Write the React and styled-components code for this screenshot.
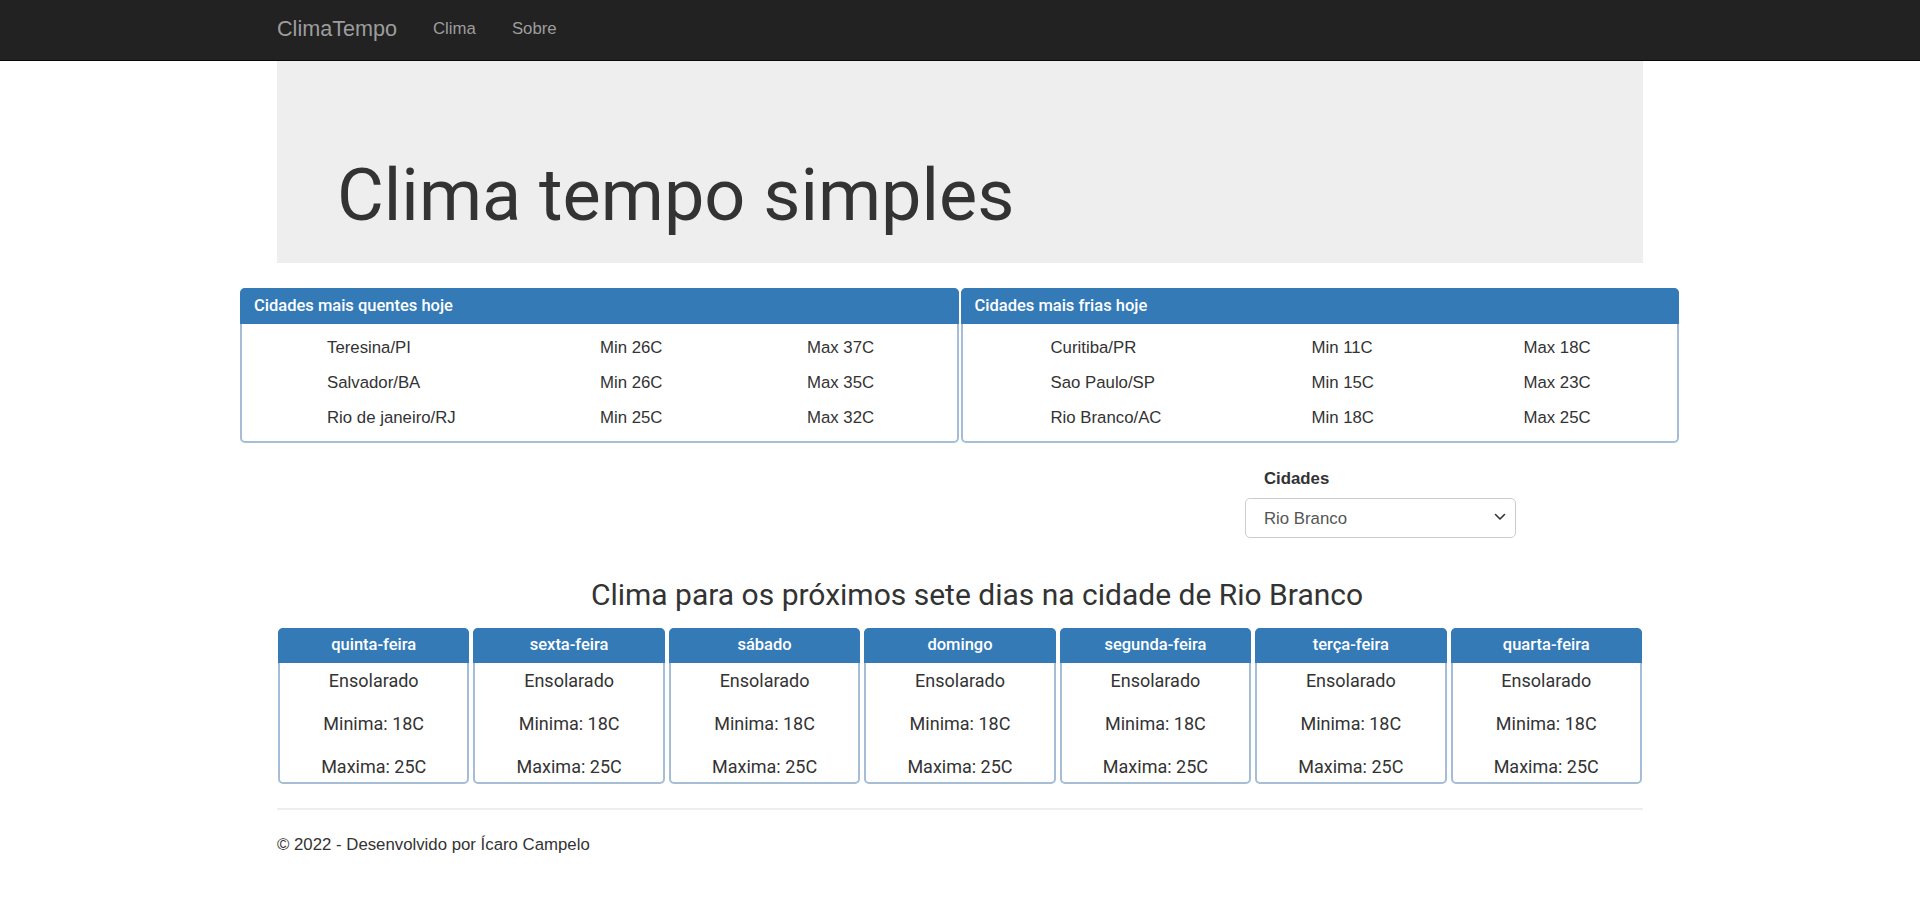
import React from 'react';
import styled, { createGlobalStyle } from 'styled-components';

const GlobalStyle = createGlobalStyle`
  html, body { margin: 0; padding: 0; background: #fff; }
  body {
    font-family: "Liberation Sans", Arial, sans-serif;
    font-size: 16.8px;
    line-height: 24px;
    color: #333;
  }
  * { box-sizing: border-box; }
`;

const Navbar = styled.nav`
  height: 61px;
  background: #222;
  border-bottom: 1px solid #080808;
`;

const NavInner = styled.div`
  width: 1366px;
  margin: 0 auto;
  height: 100%;
  display: flex;
  align-items: center;
  gap: 36px;
  padding-bottom: 2px;
`;

const Brand = styled.a`
  font-size: 21.6px;
  color: #9d9d9d;
  text-decoration: none;
  line-height: 24px;
`;

const NavLink = styled.a`
  font-size: 16.8px;
  color: #9d9d9d;
  text-decoration: none;
  line-height: 24px;
`;

const Container = styled.main`
  width: 1366px;
  margin: 0 auto;
`;

const Jumbotron = styled.section`
  background: #eee;
  padding: 95px 60px 28px;
`;

const Title = styled.h1`
  margin: 0;
  font-family: Roboto, "Liberation Sans", sans-serif;
  font-weight: 400;
  font-size: 72px;
  line-height: 1.1;
  color: #333;
`;

const PanelsRow = styled.div`
  display: flex;
  gap: 2px;
  width: 1439px;
  margin: 25px 0 0 -37px;
`;

const Panel = styled.div`
  flex: 1;
  border: 2px solid #a5bdd5;
  border-radius: 5px;
  background: #fff;
`;

const PanelHeading = styled.div`
  margin: -2px -2px 0;
  height: 36px;
  padding: 0 14px;
  display: flex;
  align-items: center;
  background: #337ab7;
  color: #fff;
  border-radius: 5px 5px 0 0;
  font-family: Roboto, "Liberation Sans", sans-serif;
  font-weight: 500;
  font-size: 16.5px;
`;

const PanelBody = styled.div`
  padding: 6px 0 6px ${p => p.$indent}px;
`;

const CityRow = styled.div`
  display: grid;
  grid-template-columns: ${p => p.$cols};
  height: 35px;
  align-items: center;
  font-size: 16.8px;
  color: #333;
`;

const FormRow = styled.div`
  display: flex;
  justify-content: flex-end;
  padding-right: 127px;
  margin-top: 24px;
`;

const FormGroup = styled.div`
  width: 271px;
  display: flex;
  flex-direction: column;
`;

const Label = styled.label`
  font-weight: 700;
  font-size: 16.8px;
  line-height: 24px;
  padding-left: 19px;
  margin-bottom: 7px;
  color: #333;
`;

const SelectWrap = styled.div`
  position: relative;
  height: 40px;
`;

const Select = styled.select`
  appearance: none;
  -webkit-appearance: none;
  width: 100%;
  height: 40px;
  border: 1px solid #ccc;
  border-radius: 5px;
  background: #fff;
  padding: 0 30px 0 18px;
  font-family: "Liberation Sans", Arial, sans-serif;
  font-size: 16.8px;
  color: #555;
  outline: none;
`;

const Chevron = styled.svg`
  position: absolute;
  right: 10px;
  top: 15px;
  pointer-events: none;
`;

const ForecastTitle = styled.h3`
  margin: 41px 0 0;
  padding-left: 34px;
  text-align: center;
  font-family: Roboto, "Liberation Sans", sans-serif;
  font-weight: 400;
  font-size: 30px;
  line-height: 31.7px;
  color: #333;
`;

const DaysRow = styled.div`
  display: flex;
  gap: 4px;
  padding: 0 1px;
  margin-top: 17px;
`;

const DayCard = styled.div`
  flex: 1;
  border: 2px solid #a5bdd5;
  border-radius: 5px;
  background: #fff;
  font-family: Roboto, "Liberation Sans", sans-serif;
`;

const DayHeading = styled.div`
  margin: -2px -2px 0;
  height: 35px;
  display: flex;
  align-items: center;
  justify-content: center;
  background: #337ab7;
  color: #fff;
  border-radius: 5px 5px 0 0;
  font-weight: 500;
  font-size: 16.5px;
`;

const DayBody = styled.div`
  display: flex;
  flex-direction: column;
  gap: 13px;
  padding-top: 3px;
`;

const DayLine = styled.div`
  height: 30px;
  display: flex;
  align-items: center;
  justify-content: center;
  font-size: 18px;
  color: #333;
`;

const Rule = styled.hr`
  margin: 24px 0 0;
  border: 0;
  border-top: 2px solid #eee;
`;

const Footer = styled.footer`
  margin-top: 23px;
  font-size: 16.8px;
  line-height: 24px;
  color: #333;
`;

const hot = [
  ['Teresina/PI', 'Min 26C', 'Max 37C'],
  ['Salvador/BA', 'Min 26C', 'Max 35C'],
  ['Rio de janeiro/RJ', 'Min 25C', 'Max 32C'],
];

const cold = [
  ['Curitiba/PR', 'Min 11C', 'Max 18C'],
  ['Sao Paulo/SP', 'Min 15C', 'Max 23C'],
  ['Rio Branco/AC', 'Min 18C', 'Max 25C'],
];

const days = ['quinta-feira', 'sexta-feira', 'sábado', 'domingo', 'segunda-feira', 'terça-feira', 'quarta-feira'];

function CityPanel({ title, rows, indent, cols }) {
  return (
    <Panel>
      <PanelHeading>{title}</PanelHeading>
      <PanelBody $indent={indent}>
        {rows.map(r => (
          <CityRow key={r[0]} $cols={cols}>
            <span>{r[0]}</span>
            <span>{r[1]}</span>
            <span>{r[2]}</span>
          </CityRow>
        ))}
      </PanelBody>
    </Panel>
  );
}

export default function App() {
  return (
    <>
      <GlobalStyle />
      <Navbar>
        <NavInner>
          <Brand href="#">ClimaTempo</Brand>
          <NavLink href="#">Clima</NavLink>
          <NavLink href="#">Sobre</NavLink>
        </NavInner>
      </Navbar>
      <Container>
        <Jumbotron>
          <Title>Clima tempo simples</Title>
        </Jumbotron>
        <PanelsRow>
          <CityPanel title="Cidades mais quentes hoje" rows={hot} indent={85} cols="273px 207px 1fr" />
          <CityPanel title="Cidades mais frias hoje" rows={cold} indent={88} cols="261px 212px 1fr" />
        </PanelsRow>
        <FormRow>
          <FormGroup>
            <Label htmlFor="cidades">Cidades</Label>
            <SelectWrap>
              <Select id="cidades" defaultValue="Rio Branco">
                <option>Rio Branco</option>
                <option>Curitiba</option>
                <option>Sao Paulo</option>
              </Select>
              <Chevron width="12" height="8" viewBox="0 0 12 8">
                <path d="M1.5 1.5 L6 6 L10.5 1.5" fill="none" stroke="#333" strokeWidth="1.6" strokeLinecap="round" strokeLinejoin="round" />
              </Chevron>
            </SelectWrap>
          </FormGroup>
        </FormRow>
        <ForecastTitle>Clima para os próximos sete dias na cidade de Rio Branco</ForecastTitle>
        <DaysRow>
          {days.map(d => (
            <DayCard key={d}>
              <DayHeading>{d}</DayHeading>
              <DayBody>
                <DayLine>Ensolarado</DayLine>
                <DayLine>Minima: 18C</DayLine>
                <DayLine>Maxima: 25C</DayLine>
              </DayBody>
            </DayCard>
          ))}
        </DaysRow>
        <Rule />
        <Footer>© 2022 - Desenvolvido por Ícaro Campelo</Footer>
      </Container>
    </>
  );
}
